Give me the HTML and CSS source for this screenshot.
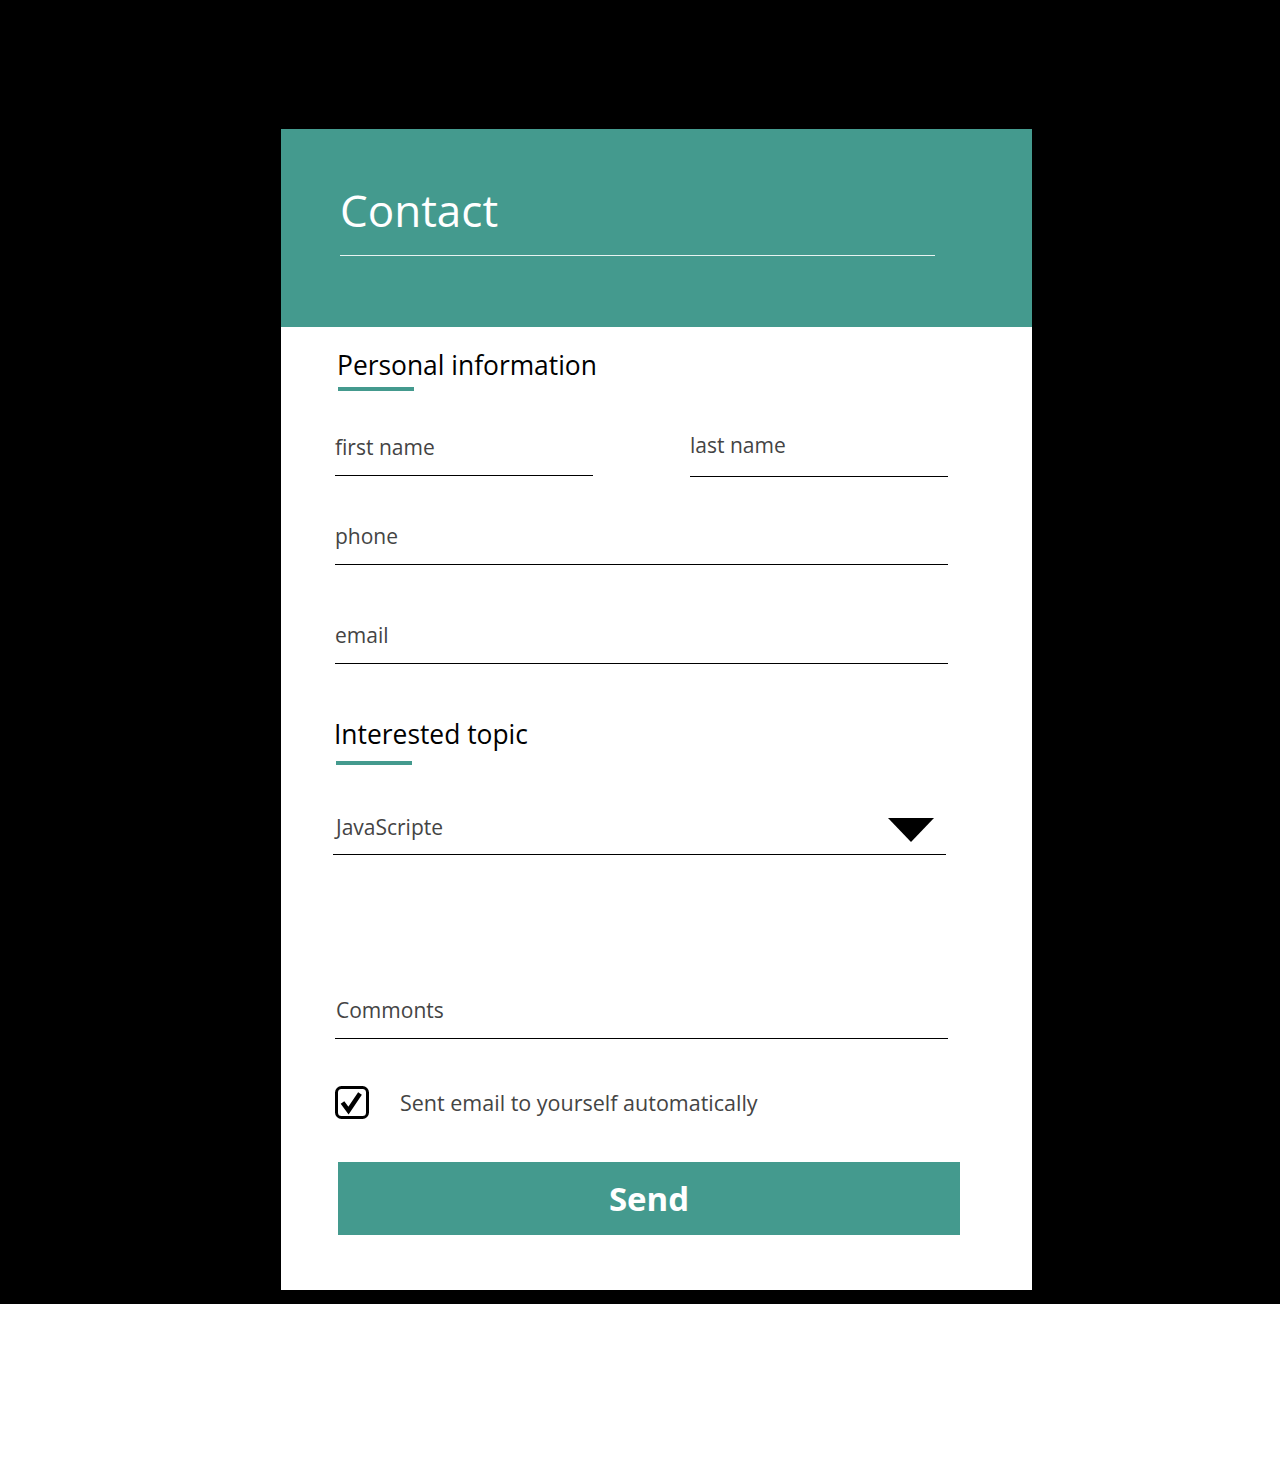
FILE: index.html
```html
<!DOCTYPE html>
<html lang="en">
<head>
<meta charset="utf-8">
<title>Contact</title>
<link rel="stylesheet" href="styles.css">
</head>
<body>
<div class="stage">
  <div class="card">
    <div class="card-header">
      <h1 class="title">Contact</h1>
      <div class="title-rule"></div>
    </div>
    <div class="card-body">
      <h2 class="section-title section-personal">Personal information</h2>
      <div class="accent accent-personal"></div>

      <div class="row">
        <div class="field field-half"><span class="label">first name</span></div>
        <div class="field field-half field-last"><span class="label">last name</span></div>
      </div>
      <div class="field field-phone"><span class="label">phone</span></div>
      <div class="field field-email"><span class="label">email</span></div>

      <h2 class="section-title section-topic">Interested topic</h2>
      <div class="accent accent-topic"></div>

      <div class="field field-select">
        <span class="label">JavaScripte</span>
        <svg class="caret" width="46" height="24" viewBox="0 0 46 24"><polygon points="0,0 46,0 23,24" fill="#000"/></svg>
      </div>

      <div class="field field-comments"><span class="label">Commonts</span></div>

      <div class="check-row">
        <svg class="checkbox" width="34" height="34" viewBox="0 0 34 34">
          <rect x="1.5" y="1.5" width="31" height="30" rx="5" ry="5" fill="none" stroke="#000" stroke-width="3"/>
          <path d="M7.5 16.5 L13.5 24.5 L25 7.5" fill="none" stroke="#000" stroke-width="4.5" stroke-linejoin="miter" stroke-linecap="butt"/>
        </svg>
        <span class="check-label">Sent email to yourself automatically</span>
      </div>

      <button class="send" type="button">Send</button>
    </div>
  </div>
</div>
</body>
</html>
```

FILE: styles.css
```css
* { box-sizing: border-box; }

html, body {
  margin: 0;
  padding: 0;
  background: #fff;
  font-family: "Open Sans", "Noto Sans", sans-serif;
}

.stage {
  background: #000;
  height: 1304px;
  padding-top: 129px;
}

.card {
  margin-left: 281px;
  width: 751px;
  height: 1161px;
  background: #fff;
}

.card-header {
  height: 198px;
  background: #449a8e;
  padding: 58px 97px 0 59px;
}

.title {
  margin: 0;
  font-size: 44px;
  line-height: 46px;
  font-weight: 400;
  color: #fff;
}

.title-rule {
  margin-top: 22px;
  height: 1px;
  background: #e8f3f1;
}

.card-body {
  padding: 0 84px 0 54px;
}

.section-title {
  margin: 0;
  font-size: 26.4px;
  line-height: 30px;
  font-weight: 400;
  color: #000;
}

.section-personal {
  padding-top: 23px;
  padding-left: 2px;
}

.accent {
  height: 4px;
  width: 76px;
  background: #449a8e;
}

.accent-personal {
  margin-top: 7px;
  margin-left: 3px;
}

.section-topic {
  margin-top: 55px;
  margin-left: -1px;
}

.accent-topic {
  margin-top: 12px;
  margin-left: 1px;
}

.row {
  display: flex;
  align-items: flex-start;
  justify-content: space-between;
  margin-top: 43px;
}

.field {
  border-bottom: 1px solid #000;
  padding-bottom: 15px;
}

.field-half {
  width: 258px;
}

.field-last {
  margin-top: -2px;
  padding-bottom: 18px;
}

.label {
  display: block;
  font-size: 21px;
  line-height: 26px;
  color: #444;
}

.field-phone {
  margin-top: 46px;
}

.field-email {
  margin-top: 57px;
}

.field-select {
  margin-top: 49px;
  margin-left: -2px;
  margin-right: 2px;
  display: flex;
  align-items: flex-end;
  justify-content: space-between;
  padding-bottom: 14px;
  padding-left: 3px;
  padding-right: 12px;
}

.caret {
  display: block;
  margin-bottom: -2px;
}

.field-comments {
  margin-top: 142px;
  padding-left: 1px;
}

.check-row {
  margin-top: 47px;
  display: flex;
  align-items: center;
  gap: 31px;
}

.checkbox {
  display: block;
  flex: none;
}

.check-label {
  font-size: 21.5px;
  line-height: 26px;
  color: #444;
}

.send {
  display: block;
  margin-top: 42px;
  margin-left: 3px;
  width: 622px;
  margin-right: -12px;
  height: 73px;
  border: 0;
  background: #449a8e;
  color: #fff;
  font-family: "Open Sans", "Noto Sans", sans-serif;
  font-weight: 700;
  font-size: 33px;
  padding: 0;
  cursor: pointer;
}
```
